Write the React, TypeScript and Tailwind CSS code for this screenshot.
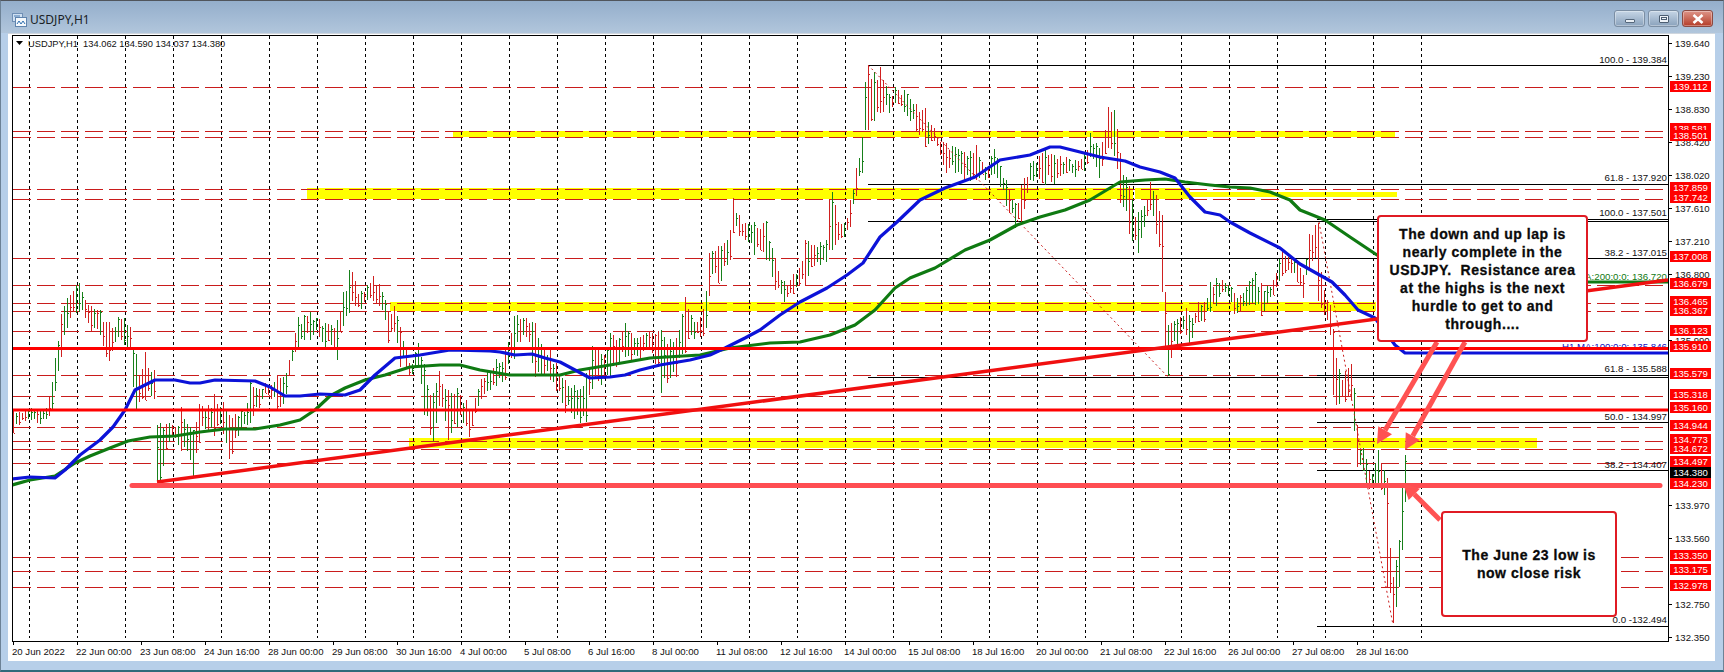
import React from "react";

type P = [number, number];
const env: [number, number, number][] = [
  [13,410,433],[20,412,424],[30,408,420],[40,410,424],[48,402,418],[52,382,410],[56,350,385],[60,317,362],[66,300,330],[75,285,313],[80,283,312],[85,300,318],[92,307,333],[100,310,335],[105,322,355],[110,322,363],[118,317,337],[124,318,345],[130,327,350],[135,350,413],[141,375,398],[145,352,400],[150,372,395],[155,370,400],[157,425,482],[160,423,482],[170,423,437],[178,426,445],[180,405,450],[190,427,460],[193,430,477],[200,400,437],[208,405,430],[215,392,437],[222,400,430],[230,417,463],[240,410,430],[246,410,425],[250,380,423],[258,390,410],[265,383,393],[272,385,400],[278,373,413],[285,378,400],[290,355,370],[297,317,350],[303,315,340],[310,312,340],[318,318,335],[325,323,350],[331,325,345],[337,320,360],[342,293,330],[347,290,312],[350,260,313],[356,285,305],[360,292,310],[367,285,300],[372,275,300],[380,285,307],[385,300,320],[387,313,345],[395,305,330],[400,327,367],[405,345,365],[410,367,378],[418,343,367],[425,367,423],[432,397,447],[440,367,400],[448,390,440],
  [456,387,427],[465,397,423],[470,413,440],[480,380,400],[495,360,387],[505,350,380],[515,312,357],[525,317,333],[535,323,377],[543,350,375],[550,350,380],[565,380,413],[575,385,420],[585,377,427],[593,342,383],[602,355,385],[610,333,377],[625,323,357],[632,335,360],[640,337,360],[650,330,345],[662,330,397],[675,343,380],[685,297,353],[695,325,337],[705,303,340],[708,268,305],[710,237,287],[720,248,283],[730,230,260],[733,198,233],[739,215,236],[745,223,240],[755,222,257],[765,217,257],[775,258,290],[785,283,303],[792,275,295],[800,267,285],[805,240,285],[820,242,265],[826,240,262],[828,202,250],[833,190,250],[838,222,240],[845,223,237],[850,200,227],[855,173,200],[862,137,173],[865,82,130],[868,65,130],[875,73,120],[880,67,113],[890,97,113],[895,87,103],[905,90,113],[915,103,130],[925,108,147],[935,130,140],[945,143,173],[955,147,173],[965,153,183],[975,143,180],[985,167,180],[995,147,173],[1005,177,203],[1015,203,228],[1022,182,223],[1030,163,180],[1045,150,185],[1053,155,185],[1065,157,173],[1075,160,177],[1085,153,170],[1090,133,157],[1100,150,180],[1107,107,147],[1115,110,157],[1120,153,203],[1130,190,237],[1137,213,257],[1145,205,223],[1150,182,210],[1157,197,238],[1162,215,292],[1165,292,348],[1168,325,376],[1172,322,352],[1178,318,345],[1185,305,332],[1190,318,348],[1197,302,322],[1205,302,322],[1210,282,312],[1215,278,308],[1222,280,292],[1230,285,298],[1235,295,318],[1240,295,312],[1248,282,305],[1255,272,305],[1262,285,318],[1272,283,298],[1278,262,282],[1283,248,275],[1290,257,272],[1297,260,282],[1303,275,298],[1308,235,272],[1315,225,258],[1319,222,315],[1323,288,312],[1330,305,335],[1334,337,415],[1340,375,402],[1346,370,402],[1352,363,400],[1355,400,447],[1358,437,477],[1362,445,465],[1365,455,483],[1370,475,490],[1375,463,483],[1378,450,483],[1381,463,490],[1384,470,495],[1387,478,587],[1390,548,593],[1393,577,623],[1396,560,607],[1399,540,587],[1402,483,550],[1405,455,502],
];

const forcedUp = new Set([157, 160, 1168, 1378, 1396, 1399, 1402, 1405]);
const forcedDown = new Set([868, 1162, 1165, 1319, 1333, 1336, 1357, 1387, 1390]);

function seeded(seed: number) {
  let a = seed;
  return () => {
    a = (a + 0x6d2b79f5) | 0;
    let t = Math.imul(a ^ (a >>> 15), 1 | a);
    t = (t + Math.imul(t ^ (t >>> 7), 61 | t)) ^ t;
    return ((t ^ (t >>> 14)) >>> 0) / 4294967296;
  };
}

function makeBars() {
  const r = seeded(2022);
  let red = "";
  let green = "";
  for (let x = 13; x <= 1405; x += 3) {
    let j = 0;
    while (j < env.length - 2 && env[j + 1][0] < x) j++;
    const a = env[j];
    const b = env[j + 1];
    const f = Math.min(1, Math.max(0, (x - a[0]) / (b[0] - a[0])));
    let top = a[1] + (b[1] - a[1]) * f;
    let bot = a[2] + (b[2] - a[2]) * f;
    const near = Math.abs(a[0] - x) <= 1.5 || Math.abs(b[0] - x) <= 1.5;
    if (!near) {
      const s = bot - top;
      top += r() * s * 0.3;
      bot -= r() * s * 0.3;
    }
    top = Math.round(top);
    bot = Math.round(bot);
    const o = Math.round(top + r() * (bot - top));
    const c = Math.round(top + r() * (bot - top));
    const d = `M${x + 0.5} ${top}V${bot}M${x + 1} ${c + 0.5}H${x + 2}`;
    const up = forcedUp.has(x) ? true : forcedDown.has(x) ? false : c < o;
    if (up) green += d;
    else red += d;
  }
  return { red, green };
}
const bars = makeBars();

const blue: P[] = [[12,479],[30,477],[55,478],[65,470],[80,455],[100,440],[113,427],[125,410],[135,390],[145,385],[155,380],[175,380],[190,383],[200,383],[215,380],[255,381],[270,387],[285,396],[300,396],[320,394],[345,395],[360,390],[375,375],[395,358],[420,355],[450,350],[490,351],[500,352],[515,355],[532,354],[545,358],[560,362],[575,370],[590,378],[610,377],[625,375],[640,370],[660,365],[690,360],[710,355],[725,348],[745,338],[760,330],[780,315],[800,302],[827,288],[847,275],[863,263],[880,237],[897,222],[920,200],[945,188],[975,177],[1000,160],[1030,155],[1050,147],[1060,147],[1080,152],[1100,157],[1125,161],[1140,167],[1160,172],[1175,178],[1190,197],[1205,212],[1220,215],[1230,222],[1250,233],[1280,248],[1300,264],[1325,278],[1332,282],[1345,295],[1358,310],[1375,318],[1395,345],[1405,353],[1668,353]];
const green: P[] = [[12,485],[30,480],[55,476],[75,463],[90,456],[110,448],[128,441],[150,437],[175,436],[200,432],[225,429],[255,429],[280,425],[300,420],[315,410],[330,396],[345,388],[365,380],[385,375],[410,367],[440,365],[460,365],[480,370],[510,375],[560,375],[580,370],[610,365],[650,358],[700,355],[730,348],[770,343],[800,342],[830,335],[855,325],[875,310],[895,288],[910,278],[935,268],[965,250],[990,240],[1017,225],[1040,217],[1065,210],[1090,200],[1110,188],[1120,182],[1145,180],[1165,179],[1185,182],[1210,185],[1230,187],[1250,188],[1270,192],[1290,200],[1300,210],[1325,220],[1350,237],[1377,255],[1400,270],[1420,282],[1668,282]];
const pts = (l: P[]) => l.map((p) => p.join(",")).join(" ");

const dashed = [87,131,137,189,199,258,285,303,311,331,375,396,427,441,449,463,557,571,587];
const grid = Array.from({ length: 30 }, (_, i) => 29.5 + 48 * i);
const fibLines: [number, number][] = [[868,65],[868,184],[868,221],[868,258],[868,377],[1317,219],[1317,375],[1317,422],[1317,470],[1317,626]];
const fibText: [string, number, string][] = [
  ["100.0 - 139.384",63,"#111"],["61.8 - 137.920",181,"#111"],["100.0 - 137.501",216,"#111"],["38.2 - 137.015",256,"#111"],["H1 MA:200:0:0: 136.720",280,"#0f7a12"],["H1 MA:100:0:0: 135.846",350,"#1010c0"],["61.8 - 135.588",372,"#111"],["50.0 - 134.997",420,"#111"],["38.2 - 134.407",468,"#111"],["0.0 -132.494",623,"#111"],
];

function Arrow({ x1, y1, x2, y2 }: { x1: number; y1: number; x2: number; y2: number }) {
  const len = Math.hypot(x2 - x1, y2 - y1);
  const ux = (x2 - x1) / len;
  const uy = (y2 - y1) / len;
  const bx = x2 - ux * 16;
  const by = y2 - uy * 16;
  const nx = -uy * 8;
  const ny = ux * 8;
  return (
    <g>
      <line x1={x1} y1={y1} x2={bx} y2={by} stroke="#ff5252" strokeWidth={5} />
      <polygon points={`${x2},${y2} ${bx + nx},${by + ny} ${bx - nx},${by - ny}`} fill="#ff5252" />
    </g>
  );
}

function Plot() {
  return (
    <svg viewBox="13 36 1655 605" className="block w-[1655px] h-[605px]">
      {[[453,1395,131,6],[307,1133,188,11],[1135,1190,188,11],[1190,1397,192,5],[390,1376,302,9],[409,1537,438,10]].map(([a, b, y, h], i) => (
        <rect key={i} x={a} y={y} width={b - a} height={h} fill="#ffff00" />
      ))}
      {grid.map((x) => (
        <line key={x} x1={x} x2={x} y1={36} y2={638} stroke="#000" strokeDasharray="3 3" shapeRendering="crispEdges" />
      ))}
      {dashed.map((y) => (
        <line key={y} x1={12.7} x2={1663} y1={y + 0.5} y2={y + 0.5} stroke="#c91c1c" strokeDasharray="18 6" shapeRendering="crispEdges" />
      ))}
      {fibLines.map(([x, y], i) => (
        <line key={i} x1={x} x2={1668} y1={y + 0.5} y2={y + 0.5} stroke="#000" shapeRendering="crispEdges" />
      ))}
      <path d={bars.red} stroke="#d02020" fill="none" shapeRendering="crispEdges" />
      <path d={bars.green} stroke="#17801a" fill="none" shapeRendering="crispEdges" />
      <line x1={868} y1={65} x2={1168} y2={377} stroke="#c91c1c" strokeDasharray="2 3" />
      <line x1={1319} y1={222} x2={1393} y2={625} stroke="#c91c1c" strokeDasharray="2 3" />
      {fibText.map(([t, y, c]) => (
        <text key={t} x={1667} y={y} textAnchor="end" fill={c} fontSize={9.7} className="[font-family:'Liberation_Sans',sans-serif]">{t}</text>
      ))}
      <polyline points={pts(green)} fill="none" stroke="#0f7a12" strokeWidth={3.2} strokeLinejoin="round" />
      <polyline points={pts(blue)} fill="none" stroke="#0c12d8" strokeWidth={3.2} strokeLinejoin="round" />
      <line x1={12} x2={1668} y1={348.5} y2={348.5} stroke="#ff0000" strokeWidth={3} />
      <line x1={12} x2={1668} y1={410} y2={410} stroke="#ff0000" strokeWidth={3} />
      <line x1={157} y1={482} x2={1668} y2={280} stroke="#f01010" strokeWidth={3.5} />
      <line x1={132} x2={1660} y1={485.5} y2={485.5} stroke="#ff4d52" strokeWidth={5} strokeLinecap="round" />
      <Arrow x1={1437} y1={342} x2={1377} y2={444} />
      <Arrow x1={1465} y1={342} x2={1405} y2={450} />
      <Arrow x1={1440} y1={520} x2={1403} y2={483} />
      <polygon points="16,41 23,41 19.5,45" fill="#000" />
      <text x={28} y={46.5} fontSize={9.3} fill="#111" xmlSpace="preserve" className="[font-family:'Liberation_Sans',sans-serif]">USDJPY,H1  134.062 134.590 134.037 134.380</text>
    </svg>
  );
}

const yTicks: [string, number][] = [["139.640",44],["139.230",77],["138.830",110],["138.420",143],["138.020",176],["137.610",209],["137.210",242],["136.800",275],["135.990",341],["133.970",506],["133.560",539],["132.750",605],["132.350",638]];
const yTags: [string, number, string][] = [["139.112",87,"#ff0000"],["138.581",129,"#ff0000"],["138.501",136,"#ff0000"],["137.859",188,"#ff0000"],["137.742",198,"#ff0000"],["137.008",257,"#ff0000"],["136.679",284,"#ff0000"],["136.465",302,"#ff0000"],["136.367",311,"#ff0000"],["136.123",331,"#ff0000"],["135.910",347,"#ff0000"],["135.579",374,"#ff0000"],["135.318",395,"#ff0000"],["135.160",408,"#ff0000"],["134.944",426,"#ff0000"],["134.773",440,"#ff0000"],["134.672",449,"#ff0000"],["134.497",462,"#ff0000"],["134.380",473,"#000000"],["134.230",484,"#ff0000"],["133.350",556,"#ff0000"],["133.175",570,"#ff0000"],["132.978",586,"#ff0000"]];

function PriceAxis() {
  return (
    <div className="relative w-[46px] h-[607px] text-[9.6px] leading-[11px]">
      {yTicks.map(([t, y]) => (
        <div key={t} className="absolute left-0 flex items-center h-[11px] text-[#111]" style={{ top: y - 35 - 6 }}>
          <span className="w-[3px] h-px bg-black mr-[3px]" />
          {t}
        </div>
      ))}
      {yTags.map(([t, y, c]) => (
        <div key={t} className="absolute left-[1px] w-[41px] h-[11px] text-center text-white" style={{ top: y - 35 - 6, backgroundColor: c }}>
          {t}
        </div>
      ))}
    </div>
  );
}

const times = ["20 Jun 2022","22 Jun 00:00","23 Jun 08:00","24 Jun 16:00","28 Jun 00:00","29 Jun 08:00","30 Jun 16:00","4 Jul 00:00","5 Jul 08:00","6 Jul 16:00","8 Jul 00:00","11 Jul 08:00","12 Jul 16:00","14 Jul 00:00","15 Jul 08:00","18 Jul 16:00","20 Jul 00:00","21 Jul 08:00","22 Jul 16:00","26 Jul 00:00","27 Jul 08:00","28 Jul 16:00"];

function TimeAxis() {
  return (
    <div className="flex pl-[1px] text-[9.6px] leading-[11px] text-[#111]">
      {times.map((t) => (
        <div key={t} className="w-[64px] shrink-0 flex flex-col">
          <span className="w-px h-[3px] bg-black" />
          <span className="-ml-px mt-[1px] whitespace-nowrap">{t}</span>
        </div>
      ))}
    </div>
  );
}

function Callout({ className, children }: { className: string; children: React.ReactNode }) {
  return (
    <div className={`absolute flex items-center justify-center bg-white border-2 border-[#e01b24] rounded-[4px] text-center font-bold text-[14px] leading-[18px] tracking-[0.55px] text-[#0a0a0a] [-webkit-text-stroke:0.3px_#0a0a0a] whitespace-pre ${className}`}>
      <div>{children}</div>
    </div>
  );
}

function WinButton({ className, children }: { className: string; children: React.ReactNode }) {
  return (
    <div className={`w-[31px] h-[17px] rounded-[3px] border flex items-center justify-center shadow-[inset_0_0_0_1px_rgba(255,255,255,0.35)] ${className}`}>
      {children}
    </div>
  );
}

export default function App() {
  return (
    <div className="w-[1724px] h-[672px] flex flex-col overflow-hidden bg-[#b7cfe9] border-t border-t-[#50555c] border-b-2 border-b-[#2f6a7a] border-x border-x-[#6d8296] [font-family:'Liberation_Sans',Arial,sans-serif]">
      <div className="h-[32px] shrink-0 flex items-center pt-[6px] pl-[11px] pr-[10px] bg-gradient-to-b from-[#94aecb] to-[#b1c6dc]">
        <svg width="15" height="15" viewBox="0 0 15 15" className="mr-[3px]">
          <rect x="0.5" y="0.5" width="10" height="8" fill="#cfe0f2" stroke="#6f8fb5" />
          <rect x="3.5" y="4.5" width="11" height="9" fill="#f4f8fc" stroke="#5f83ad" />
          <path d="M5 11l2-3 2 3 2-3 2 3" stroke="#2f6fb0" fill="none" />
          <path d="M2 3h6" stroke="#4a7bb0" />
        </svg>
        <span className="text-[12px] text-[#1a1f26] [font-family:'Noto_Sans',sans-serif]">USDJPY,H1</span>
        <div className="ml-auto flex gap-[3px] mb-[3px]">
          <WinButton className="border-[#7b8ea3] bg-gradient-to-b from-[#c6d6e6] to-[#8aa2bc]">
            <span className="mt-[4px] w-[10px] h-[4px] rounded-[1px] bg-[#e8eef4] border border-[#55677b]" />
          </WinButton>
          <WinButton className="border-[#7b8ea3] bg-gradient-to-b from-[#c6d6e6] to-[#8aa2bc]">
            <span className="w-[10px] h-[8px] rounded-[1px] bg-[#eef3f8] border border-[#4c5e72] flex items-center justify-center">
              <span className="w-[6px] h-[3px] border border-[#4c5e72]" />
            </span>
          </WinButton>
          <WinButton className="border-[#8b4a42] bg-gradient-to-b from-[#dd9488] to-[#b43a26]">
            <svg width="12" height="10" viewBox="0 0 12 10">
              <path d="M1.5 1L10.5 9M10.5 1L1.5 9" stroke="#fff" strokeWidth="2.6" />
            </svg>
          </WinButton>
        </div>
      </div>
      <div className="ml-[7px] w-[1707px] h-[628px] shrink-0 bg-white border-t border-[#cfd6de] pl-[4px] pt-[1px]">
        <div className="flex items-start">
          <div className="relative w-[1657px] h-[607px] border border-black">
            <Plot />
            <Callout className="left-[1364px] top-[179px] w-[211px] h-[127px]">
              {"The down and up lap is\nnearly complete in the\nUSDJPY.  Resistance area\nat the highs is the next\nhurdle to get to and\nthrough...."}
            </Callout>
            <Callout className="left-[1428px] top-[475px] w-[176px] h-[106px]">
              {"The June 23 low is\nnow close risk"}
            </Callout>
          </div>
          <PriceAxis />
        </div>
        <TimeAxis />
      </div>
    </div>
  );
}
